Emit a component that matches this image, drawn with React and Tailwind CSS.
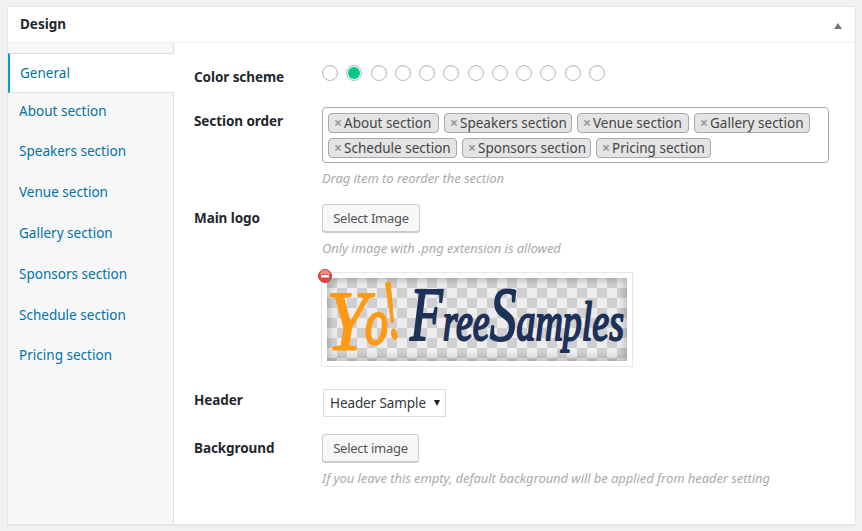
const menu = [
  ["About section", "h-[38px] pb-[2px]"],
  ["Speakers section", "h-[41px]"],
  ["Venue section", "h-[41px]"],
  ["Gallery section", "h-[41px]"],
  ["Sponsors section", "h-[41px]"],
  ["Schedule section", "h-[41px]"],
  ["Pricing section", "h-[39px]"],
];

const tags = [
  ["About section", "w-[111px]"],
  ["Speakers section", "w-[128px]"],
  ["Venue section", "w-[112px]"],
  ["Gallery section", "w-[116px]"],
  ["Schedule section", "w-[129px]"],
  ["Sponsors section", "w-[129px]"],
  ["Pricing section", "w-[115px]"],
];

function Tag({ name, width }) {
  return (
    <li className={`flex h-5 shrink-0 items-center rounded-[4px] border border-[#aaa] bg-[#e4e4e4] pl-[5px] text-[#444] ${width}`}>
      <span className="mr-[2px] w-2 text-[14px] leading-4 font-bold text-[#999]">×</span>
      <span className="leading-4 tracking-[0.01px] whitespace-nowrap">{name}</span>
    </li>
  );
}

function Hint({ children, className = "" }) {
  return <p className={`text-[13px] leading-[18px] tracking-[-0.07px] whitespace-nowrap text-[#aaa] italic ${className}`}>{children}</p>;
}

function Button({ children, className }) {
  return (
    <button className={`block h-7 rounded-[3px] border border-[#ccc] bg-[#f7f7f7] text-[13px] leading-[26px] whitespace-nowrap text-[#555] shadow-[0_1px_0_#ccc] ${className}`}>
      {children}
    </button>
  );
}

function Row({ label, className, labelClass, children }) {
  return (
    <div className={`flex ${className}`}>
      <div className={`w-32 shrink-0 leading-5 font-bold tracking-[-0.08px] text-[#23282d] ${labelClass}`}>{label}</div>
      <div className="min-w-0 flex-1">{children}</div>
    </div>
  );
}

function Logo() {
  return (
    <svg className="block h-[83px] w-[300px] overflow-visible" viewBox="0 0 300 83">
      <defs>
        <pattern id="checks" width="20" height="20" patternUnits="userSpaceOnUse">
          <rect width="20" height="20" fill="#ededed" />
          <path d="M0 0h10v10H0zM10 10h10v10H10z" fill="#cfcfcf" />
        </pattern>
        <filter id="soft" x="-10%" y="-10%" width="120%" height="120%">
          <feGaussianBlur stdDeviation="4" />
        </filter>
        <clipPath id="frame"><rect width="300" height="83" /></clipPath>
      </defs>
      <rect width="300" height="83" fill="url(#checks)" />
      <g clipPath="url(#frame)">
        <rect x="-2" y="-2" width="304" height="87" fill="none" stroke="#000" strokeOpacity=".4" strokeWidth="5" filter="url(#soft)" />
      </g>
      <g fontFamily="'Liberation Serif', serif" fontStyle="italic" letterSpacing="0" strokeWidth="1.8" strokeLinejoin="round">
        <g fill="#fe9b16" stroke="#fe9b16">
          <text x="-1" y="72" fontSize="84" textLength="42" lengthAdjust="spacingAndGlyphs">Y</text>
          <text x="38" y="66" fontSize="66" textLength="23" lengthAdjust="spacingAndGlyphs" strokeWidth="2.6">o</text>
          <text transform="translate(62 61) rotate(-12)" fontSize="84" textLength="15" lengthAdjust="spacingAndGlyphs">!</text>
        </g>
        <text x="83" y="62" fill="#1e3158" stroke="#1e3158" strokeWidth="2.2" fontSize="54" textLength="214" lengthAdjust="spacingAndGlyphs">
          <tspan fontSize="76">F</tspan><tspan>ree</tspan><tspan fontSize="76">S</tspan><tspan>amples</tspan>
        </text>
      </g>
    </svg>
  );
}

export default function App() {
  return (
    <div className="h-[531px] w-[862px] overflow-hidden bg-[#f1f1f1] pt-[6px] pl-[7px] font-['Noto_Sans','Open_Sans',sans-serif] text-[13.5px] tracking-[-0.25px]">
      <section className="flex h-[519px] w-[849px] flex-col border border-[#e5e5e5] bg-white shadow-[0_1px_1px_rgba(0,0,0,0.04)]">
        <header className="flex h-9 shrink-0 items-center justify-between border-b border-[#eee] pr-[13px] pl-3">
          <h2 className="font-bold tracking-[-0.02px] text-[#23282d]">Design</h2>
          <svg className="mt-[3px] h-[6px] w-2" viewBox="0 0 8 6"><path d="M4 0 8 6H0z" fill="#72777c" /></svg>
        </header>
        <div className="flex min-h-0 flex-1">
          <nav className="flex w-[166px] shrink-0 flex-col tracking-[0.02px] text-[#0073aa]">
            <div className="h-[10px] border-r border-[#ddd] bg-[#f7f7f7]" />
            <div className="flex h-10 items-center border-y border-l-2 border-y-[#ddd] border-l-[#00a0d2] bg-white pl-[10px]">General</div>
            <ul className="flex-1 border-r border-[#ddd] bg-[#f7f7f7] pl-[11px]">
              {menu.map(([name, height]) => (
                <li key={name} className={`flex items-center whitespace-nowrap ${height}`}>
                  <a>{name}</a>
                </li>
              ))}
            </ul>
          </nav>
          <main className="flex-1 pl-5">
            <Row label="Color scheme" className="h-16 pt-[22px]" labelClass="pt-[2px]">
              <div className="flex gap-[8.25px]">
                {Array.from({ length: 12 }, (_, i) => (
                  <span key={i} className="flex size-4 items-center justify-center rounded-full border border-[#b4b9be] bg-white shadow-[inset_0_1px_2px_rgba(0,0,0,0.07)]">
                    {i === 1 && <span className="size-3 rounded-full bg-[#00c98b]" />}
                  </span>
                ))}
              </div>
            </Row>
            <Row label="Section order" className="h-[97px]" labelClass="pt-1">
              <ul className="flex h-14 w-[507px] flex-wrap content-start gap-x-[5px] gap-y-[5px] rounded-[4px] border border-[#aaa] py-[5px] pr-3 pl-[5px]">
                {tags.map(([name, width]) => <Tag key={name} name={name} width={width} />)}
              </ul>
              <Hint className="mt-[6px]">Drag item to reorder the section</Hint>
            </Row>
            <Row label="Main logo" className="h-[185px]" labelClass="pt-1">
              <Button className="w-[98px]">Select Image</Button>
              <Hint className="mt-[7px]">Only image with .png extension is allowed</Hint>
              <div className="relative mt-[15px] -ml-px h-[95px] w-[312px] border border-[#e5e5e5] p-[5px]">
                <Logo />
                <svg className="absolute -top-[4px] -left-[4px] size-[14px]" viewBox="0 0 14 14">
                  <circle cx="7" cy="7" r="6.5" fill="#e8453f" stroke="#c9403a" />
                  <path d="M2 6a5 5 0 0 1 10 0Q7 4 2 6z" fill="#f58b82" />
                  <rect x="3" y="6" width="8" height="2.5" rx=".5" fill="#fff" />
                </svg>
              </div>
            </Row>
            <Row label="Header" className="h-[45px]" labelClass="pt-[1px]">
              <div className="ml-px flex h-7 w-[123px] items-center justify-between border border-[#ddd] pr-[5px] pl-[6px] tracking-[-0.1px] text-[#32373c]">
                <span className="whitespace-nowrap">Header Sample</span>
                <svg className="h-[6px] w-[6px]" viewBox="0 0 6 6"><path d="M0 0h6L3 6z" fill="#222" /></svg>
              </div>
            </Row>
            <Row label="Background" className="" labelClass="pt-1">
              <Button className="w-[97px]">Select image</Button>
              <Hint className="mt-[7px]">If you leave this empty, default background will be applied from header setting</Hint>
            </Row>
          </main>
        </div>
      </section>
    </div>
  );
}
